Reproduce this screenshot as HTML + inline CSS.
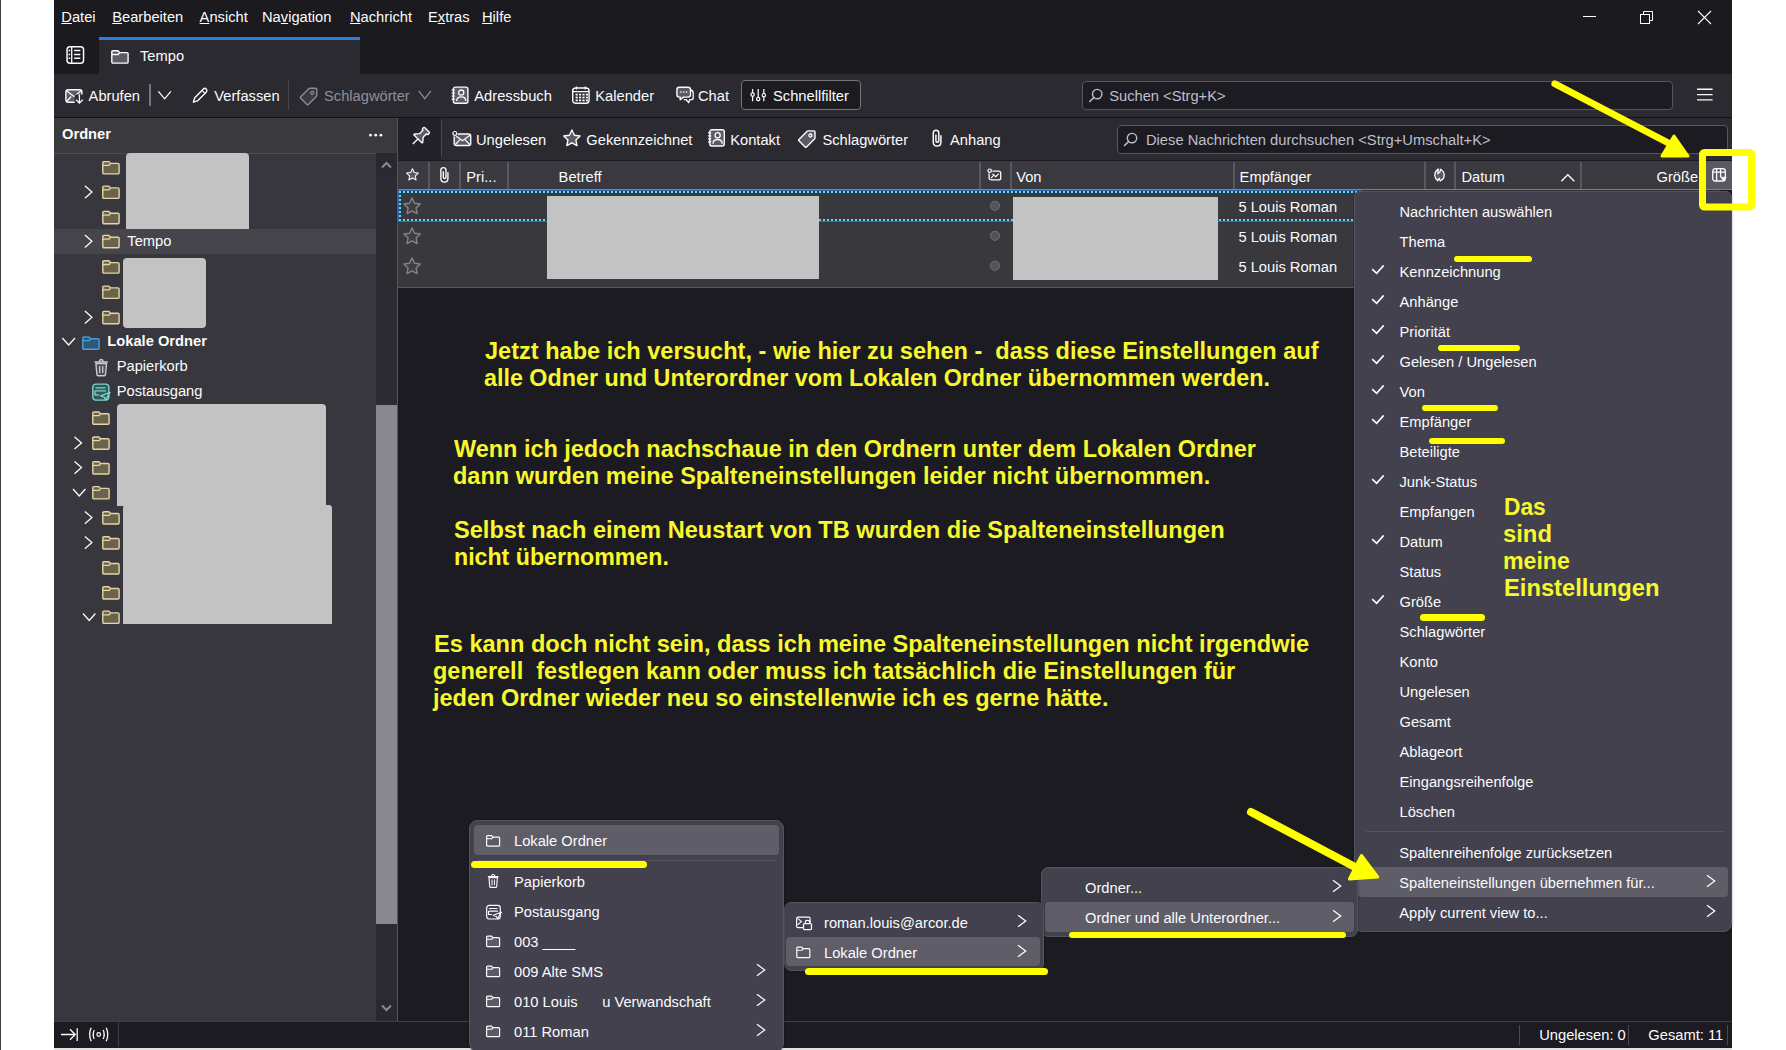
<!DOCTYPE html>
<html><head><meta charset="utf-8"><style>
html,body{margin:0;padding:0;width:1786px;height:1050px;overflow:hidden;background:#fff;}
.b{position:absolute;}
.t{position:absolute;white-space:nowrap;font-family:"Liberation Sans", sans-serif;}
u{text-decoration:underline;text-underline-offset:1px;text-decoration-thickness:1px;}
</style></head><body>
<div class="b" style="left:0px;top:0px;width:1786px;height:1050px;background:#ffffff;"></div>
<div class="b" style="left:0px;top:0px;width:1px;height:1050px;background:#3c3c3c;"></div>
<div class="b" style="left:54px;top:1047.5px;width:1678px;height:2.5px;background:#e2e2e2;"></div>
<div class="b" style="left:54px;top:0px;width:1678px;height:1047px;background:#1c1b22;"></div>
<div class="b" style="left:54px;top:0px;width:1678px;height:74px;background:#1b1a1f;"></div>
<div class="t" style="left:61.3px;top:6.9px;font-size:14.7px;line-height:20px;color:#fbfbfe;"><u>D</u>atei</div>
<div class="t" style="left:112.2px;top:6.9px;font-size:14.7px;line-height:20px;color:#fbfbfe;"><u>B</u>earbeiten</div>
<div class="t" style="left:199.6px;top:6.9px;font-size:14.7px;line-height:20px;color:#fbfbfe;"><u>A</u>nsicht</div>
<div class="t" style="left:262px;top:6.9px;font-size:14.7px;line-height:20px;color:#fbfbfe;">Na<u>v</u>igation</div>
<div class="t" style="left:350px;top:6.9px;font-size:14.7px;line-height:20px;color:#fbfbfe;"><u>N</u>achricht</div>
<div class="t" style="left:428px;top:6.9px;font-size:14.7px;line-height:20px;color:#fbfbfe;">E<u>x</u>tras</div>
<div class="t" style="left:482px;top:6.9px;font-size:14.7px;line-height:20px;color:#fbfbfe;"><u>H</u>ilfe</div>
<svg class="b" style="left:1583px;top:10px;" width="14" height="14" viewBox="0 0 14 14" fill="none"><path d="M0 6.5H13" stroke="#fbfbfe" stroke-width="1"/></svg>
<svg class="b" style="left:1639px;top:10px;" width="16" height="16" viewBox="0 0 16 16" fill="none"><rect x="1.5" y="4.5" width="9" height="9" stroke="#fbfbfe"/><path d="M4.5 4.5V1.5H13.5V10.5H10.5" stroke="#fbfbfe"/></svg>
<svg class="b" style="left:1697px;top:10px;" width="15" height="15" viewBox="0 0 15 15" fill="none"><path d="M1 1L14 14M14 1L1 14" stroke="#fbfbfe" stroke-width="1.1"/></svg>
<div class="b" style="left:54px;top:37px;width:45px;height:37px;background:#1a1a1f;"></div>
<div class="b" style="left:99px;top:37px;width:261px;height:37px;background:#2b2a31;"></div>
<div class="b" style="left:99px;top:37px;width:261px;height:3px;background:#2a7fdc;"></div>
<div class="t" style="left:140px;top:46.1px;font-size:14.7px;line-height:20px;color:#fbfbfe;">Tempo</div>
<div class="b" style="left:54px;top:74px;width:1678px;height:43px;background:#2b2a31;"></div>
<div class="b" style="left:54px;top:116.5px;width:1678px;height:1.5px;background:#131217;"></div>
<div class="t" style="left:88.6px;top:86.1px;font-size:14.7px;line-height:20px;color:#fbfbfe;">Abrufen</div>
<div class="b" style="left:149.3px;top:84px;width:1.5px;height:21.5px;background:#76757b;"></div>
<div class="t" style="left:214.3px;top:86.1px;font-size:14.7px;line-height:20px;color:#fbfbfe;">Verfassen</div>
<div class="b" style="left:288px;top:80px;width:1px;height:30px;background:#45444c;"></div>
<div class="t" style="left:324px;top:86.1px;font-size:14.7px;line-height:20px;color:#8f8f9d;">Schlagwörter</div>
<div class="t" style="left:474.3px;top:86.1px;font-size:14.7px;line-height:20px;color:#fbfbfe;">Adressbuch</div>
<div class="t" style="left:595.3px;top:86.1px;font-size:14.7px;line-height:20px;color:#fbfbfe;">Kalender</div>
<div class="t" style="left:698px;top:86.1px;font-size:14.7px;line-height:20px;color:#fbfbfe;">Chat</div>
<div class="b" style="left:740.5px;top:80px;width:120.5px;height:30px;background:#1c1b20;border:1px solid #76757c;border-radius:4px;box-sizing:border-box;"></div>
<div class="t" style="left:773px;top:86.1px;font-size:14.7px;line-height:20px;color:#fbfbfe;">Schnellfilter</div>
<div class="b" style="left:1082px;top:80.5px;width:591px;height:29.5px;background:#1c1b22;border:1px solid #57565e;border-radius:4px;box-sizing:border-box;"></div>
<div class="t" style="left:1109.2px;top:86.1px;font-size:14.7px;line-height:20px;color:#bfbfc9;">Suchen &lt;Strg+K&gt;</div>
<div class="b" style="left:54px;top:118px;width:343px;height:904px;background:#38373d;"></div>
<div class="b" style="left:54px;top:118px;width:343px;height:35px;background:#3a393e;"></div>
<div class="b" style="left:54px;top:152.5px;width:322px;height:1.0px;background:#4f4e56;"></div>
<div class="b" style="left:397px;top:118px;width:1px;height:904px;background:#56555d;"></div>
<div class="t" style="left:62px;top:124.4px;font-size:14.7px;line-height:20px;color:#fbfbfe;font-weight:bold;">Ordner</div>
<div class="b" style="left:398px;top:118px;width:1334px;height:42px;background:#2b2a31;"></div>
<div class="b" style="left:398px;top:118px;width:43px;height:42px;background:#23222b;"></div>
<div class="b" style="left:441px;top:120px;width:1px;height:37px;background:#4a4951;"></div>
<div class="b" style="left:398px;top:160px;width:1334px;height:1px;background:#1c1b22;"></div>
<div class="t" style="left:476px;top:130.1px;font-size:14.7px;line-height:20px;color:#fbfbfe;">Ungelesen</div>
<div class="t" style="left:586.3px;top:130.1px;font-size:14.7px;line-height:20px;color:#fbfbfe;">Gekennzeichnet</div>
<div class="t" style="left:730.2px;top:130.1px;font-size:14.7px;line-height:20px;color:#fbfbfe;">Kontakt</div>
<div class="t" style="left:822.4px;top:130.1px;font-size:14.7px;line-height:20px;color:#fbfbfe;">Schlagwörter</div>
<div class="t" style="left:950px;top:130.1px;font-size:14.7px;line-height:20px;color:#fbfbfe;">Anhang</div>
<div class="b" style="left:1117px;top:124.5px;width:611px;height:29.5px;background:#1c1b22;border:1px solid #57565e;border-radius:4px;box-sizing:border-box;"></div>
<div class="t" style="left:1146px;top:130.1px;font-size:14.7px;line-height:20px;color:#bfbfc9;">Diese Nachrichten durchsuchen &lt;Strg+Umschalt+K&gt;</div>
<div class="b" style="left:398px;top:161px;width:1334px;height:28px;background:#3a393f;"></div>
<div class="b" style="left:398px;top:189px;width:1334px;height:1px;background:#7b878d;"></div>
<div class="b" style="left:428.3px;top:161.5px;width:2.0px;height:27.0px;background:#58575f;"></div>
<div class="b" style="left:459.2px;top:161.5px;width:2.0px;height:27.0px;background:#58575f;"></div>
<div class="b" style="left:506.5px;top:161.5px;width:2.0px;height:27.0px;background:#58575f;"></div>
<div class="b" style="left:978.7px;top:161.5px;width:2.0px;height:27.0px;background:#58575f;"></div>
<div class="b" style="left:1009.5px;top:161.5px;width:2.0px;height:27.0px;background:#58575f;"></div>
<div class="b" style="left:1232.5px;top:161.5px;width:2.0px;height:27.0px;background:#58575f;"></div>
<div class="b" style="left:1424.4px;top:161.5px;width:2.0px;height:27.0px;background:#58575f;"></div>
<div class="b" style="left:1454.4px;top:161.5px;width:2.0px;height:27.0px;background:#58575f;"></div>
<div class="b" style="left:1580.4px;top:161.5px;width:2.0px;height:27.0px;background:#58575f;"></div>
<div class="t" style="left:466.3px;top:166.7px;font-size:14.7px;line-height:20px;color:#fbfbfe;">Pri...</div>
<div class="t" style="left:558.6px;top:166.7px;font-size:14.7px;line-height:20px;color:#fbfbfe;">Betreff</div>
<div class="t" style="left:1016.2px;top:166.7px;font-size:14.7px;line-height:20px;color:#fbfbfe;">Von</div>
<div class="t" style="left:1239.6px;top:166.7px;font-size:14.7px;line-height:20px;color:#fbfbfe;">Empfänger</div>
<div class="t" style="left:1461.4px;top:166.7px;font-size:14.7px;line-height:20px;color:#fbfbfe;">Datum</div>
<div class="t" style="left:1656.5px;top:166.7px;font-size:14.7px;line-height:20px;color:#fbfbfe;">Größe</div>
<div class="b" style="left:1705.6px;top:161px;width:26.40000000000009px;height:28px;background:#5a5961;"></div>
<div class="b" style="left:398px;top:190px;width:1334px;height:97px;background:#38383d;"></div>
<div class="b" style="left:398px;top:287px;width:1334px;height:1px;background:#56555d;"></div>
<div class="t" style="left:1238.4px;top:196.6px;font-size:14.7px;line-height:20px;color:#fbfbfe;">5 Louis Roman</div>
<div class="t" style="left:1238.4px;top:226.6px;font-size:14.7px;line-height:20px;color:#fbfbfe;">5 Louis Roman</div>
<div class="t" style="left:1238.4px;top:256.6px;font-size:14.7px;line-height:20px;color:#fbfbfe;">5 Louis Roman</div>
<div class="b" style="left:398px;top:190px;width:964px;height:32px;border:1px solid #2a6cb0;box-sizing:border-box;"></div>
<div class="b" style="left:399px;top:191px;width:962px;height:30px;border:2px solid #0e4867;box-sizing:border-box;"></div>
<div class="b" style="left:399px;top:191px;width:962px;height:30px;border:2px dotted #78d2f2;box-sizing:border-box;"></div>
<div class="b" style="left:547px;top:196px;width:272px;height:83px;background:#c3c3c3;"></div>
<div class="b" style="left:1013px;top:197px;width:205px;height:83px;background:#c3c3c3;"></div>
<div class="b" style="left:54px;top:229px;width:322px;height:25px;background:#46454c;"></div>
<div class="t" style="left:127.3px;top:231.4px;font-size:14.7px;line-height:20px;color:#fbfbfe;">Tempo</div>
<div class="t" style="left:107.3px;top:331.4px;font-size:14.7px;line-height:20px;color:#fbfbfe;font-weight:bold;">Lokale Ordner</div>
<div class="t" style="left:116.7px;top:356.4px;font-size:14.7px;line-height:20px;color:#fbfbfe;">Papierkorb</div>
<div class="t" style="left:116.7px;top:381.4px;font-size:14.7px;line-height:20px;color:#fbfbfe;">Postausgang</div>
<div class="b" style="left:126px;top:153px;width:123px;height:76px;background:#c3c3c3;border-radius:4px 4px 0 0;"></div>
<div class="b" style="left:123px;top:258px;width:83px;height:70px;background:#c3c3c3;border-radius:4px;"></div>
<div class="b" style="left:117px;top:404px;width:209px;height:102px;background:#c3c3c3;border-radius:4px 4px 0 0;"></div>
<div class="b" style="left:123px;top:505px;width:209px;height:119px;background:#c3c3c3;border-radius:3px 3px 0 0;"></div>
<div class="b" style="left:376px;top:153px;width:21px;height:869px;background:#2c2b31;"></div>
<div class="b" style="left:376px;top:405px;width:21px;height:519px;background:#89888e;"></div>
<div class="b" style="left:376px;top:153px;width:21px;height:22px;background:#29282e;"></div>
<div class="b" style="left:376px;top:999px;width:21px;height:22px;background:#29282e;"></div>
<div class="b" style="left:54px;top:1021px;width:1678px;height:1px;background:#3f3e46;"></div>
<div class="b" style="left:54px;top:1022px;width:1678px;height:25.5px;background:#1c1b22;"></div>
<div class="b" style="left:117.5px;top:1022px;width:1.0px;height:25px;background:#3f3e46;"></div>
<div class="b" style="left:1519.2px;top:1025px;width:1.0px;height:20px;background:#4a4951;"></div>
<div class="b" style="left:1628.3px;top:1025px;width:1.0px;height:20px;background:#4a4951;"></div>
<div class="b" style="left:1726.7px;top:1025px;width:1.0px;height:20px;background:#4a4951;"></div>
<div class="t" style="left:1539.2px;top:1025.4px;font-size:14.7px;line-height:20px;color:#fbfbfe;">Ungelesen: 0</div>
<div class="t" style="left:1648.3px;top:1025.4px;font-size:14.7px;line-height:20px;color:#fbfbfe;">Gesamt: 11</div>
<svg class="b" style="left:0;top:0" width="1786" height="1050" viewBox="0 0 1786 1050" fill="none"><g transform="translate(66.3,46) scale(1)"><rect x="0.75" y="0.75" width="16.5" height="16.5" rx="3" stroke="#fbfbfe" stroke-width="1.5"/><path d="M5.4 0.75V17.25" stroke="#fbfbfe" stroke-width="1.3"/><circle cx="3.1" cy="4.5" r="0.9" fill="#fbfbfe"/><circle cx="3.1" cy="8.4" r="0.9" fill="#fbfbfe"/><circle cx="3.1" cy="12.2" r="0.9" fill="#fbfbfe"/><path d="M7.8 4.5H14M7.8 8.4H14M7.8 12.2H14" stroke="#fbfbfe" stroke-width="1.5"/></g><g transform="translate(111,49.9) scale(1)"><path d="M2 0.9H6.8L8.6 2.7H15.9Q17.1 2.7 17.1 3.9V12Q17.1 13.2 15.9 13.2H2Q0.8 13.2 0.8 12V2.1Q0.8 0.9 2 0.9Z" fill="#5b5b66" stroke="#fbfbfe" stroke-width="1.4"/><path d="M0.8 4.6H7.2L8.6 2.7" stroke="#fbfbfe" stroke-width="1.26"/></g><g transform="translate(65.2,89) scale(1)"><rect x="0.7" y="0.7" width="16" height="12.6" rx="2" fill="#5b5b66" stroke="#fbfbfe" stroke-width="1.4"/><path d="M1 1.5L8.7 7.5L16.3 1.5M1.5 12.5L6 7.5" stroke="#fbfbfe" stroke-width="1.3"/><rect x="9.5" y="5.5" width="9" height="9.5" fill="#2b2a31"/><path d="M14.2 5.2V14M10.8 10.8L14.2 14.2L17.6 10.8" stroke="#fbfbfe" stroke-width="1.3"/></g><path d="M158.4 91.3L164.65 98.8L170.9 91.3" stroke="#fbfbfe" stroke-width="1.3" fill="none"/><g transform="translate(192.4,87.6) scale(1)"><path d="M11 1.3Q12.3 0.2 13.6 1.3L14 1.7Q15.1 3 14 4.3L5 13.3L1 14.6L2.2 10.4Z" fill="none" stroke="#fbfbfe" stroke-width="1.4" stroke-linejoin="round"/><path d="M9.6 2.8L12.6 5.8" stroke="#fbfbfe" stroke-width="1.3"/></g><g transform="translate(299.6,87.3) scale(1)"><path d="M10.3 1H16.2Q17.2 1 17.2 2V7.9Q17.2 8.6 16.7 9.1L8.7 17.1Q8 17.8 7.3 17.1L1.1 10.9Q0.4 10.2 1.1 9.5L9.1 1.5Q9.6 1 10.3 1Z" fill="#3a3942" stroke="#8a8a93" stroke-width="1.4"/><circle cx="12.6" cy="5.6" r="1.5" stroke="#8a8a93" stroke-width="1.3" fill="none"/></g><path d="M418.7 90.8L424.84999999999997 98.6L431.0 90.8" stroke="#8a8a93" stroke-width="1.3" fill="none"/><g transform="translate(451.6,86.4) scale(1)"><rect x="1.8" y="0.7" width="14.5" height="16.2" rx="2" fill="#5b5b66" stroke="#fbfbfe" stroke-width="1.4"/><path d="M0 3.8H3.2M0 6.8H3.2M0 9.8H3.2M0 12.8H3.2" stroke="#fbfbfe" stroke-width="1.2"/><circle cx="9.6" cy="6.2" r="2.6" stroke="#fbfbfe" stroke-width="1.3" fill="none"/><path d="M5 14.6Q5 10.4 9.6 10.4Q14.2 10.4 14.2 14.6" stroke="#fbfbfe" stroke-width="1.3" fill="none"/></g><g transform="translate(572,86.5) scale(1)"><rect x="0.7" y="1.5" width="16.4" height="15.3" rx="3" fill="none" stroke="#fbfbfe" stroke-width="1.4"/><path d="M0.7 5.2H17.1M4.5 0V3M13.3 0V3" stroke="#fbfbfe" stroke-width="1.3"/><rect x="3.6" y="7.2" width="2.2" height="1.8" fill="#fbfbfe"/><rect x="3.6" y="10.1" width="2.2" height="1.8" fill="#fbfbfe"/><rect x="3.6" y="13.0" width="2.2" height="1.8" fill="#fbfbfe"/><rect x="7.0" y="7.2" width="2.2" height="1.8" fill="#fbfbfe"/><rect x="7.0" y="10.1" width="2.2" height="1.8" fill="#fbfbfe"/><rect x="7.0" y="13.0" width="2.2" height="1.8" fill="#fbfbfe"/><rect x="10.4" y="7.2" width="2.2" height="1.8" fill="#fbfbfe"/><rect x="10.4" y="10.1" width="2.2" height="1.8" fill="#fbfbfe"/><rect x="10.4" y="13.0" width="2.2" height="1.8" fill="#fbfbfe"/><rect x="13.799999999999999" y="7.2" width="2.2" height="1.8" fill="#fbfbfe"/><rect x="13.799999999999999" y="10.1" width="2.2" height="1.8" fill="#fbfbfe"/><rect x="13.799999999999999" y="13.0" width="2.2" height="1.8" fill="#fbfbfe"/></g><g transform="translate(676.2,86.5) scale(1)"><path d="M3 0.8H12Q14.3 0.8 14.3 3.1V8.3Q14.3 10.6 12 10.6H7.2L4 13.2V10.6H3Q0.7 10.6 0.7 8.3V3.1Q0.7 0.8 3 0.8Z" fill="#5b5b66" stroke="#fbfbfe" stroke-width="1.4" stroke-linejoin="round"/><path d="M14.6 3.5Q17 4 17 6.3V11.2Q17 13.2 15 13.2H13.4L12.6 16.2L10 13.2H7.5" stroke="#fbfbfe" stroke-width="1.3" fill="none" stroke-linejoin="round"/><circle cx="4.7" cy="5.6" r="0.8" fill="#fbfbfe"/><circle cx="7.5" cy="5.6" r="0.8" fill="#fbfbfe"/><circle cx="10.3" cy="5.6" r="0.8" fill="#fbfbfe"/></g><path d="M752.6 89V101.2M758.2 89V101.2M763.8 89V101.2" stroke="#fbfbfe" stroke-width="1.25"/><circle cx="752.6" cy="94.6" r="1.7" fill="#1c1b22" stroke="#fbfbfe" stroke-width="1.2"/><circle cx="758.2" cy="99" r="1.7" fill="#1c1b22" stroke="#fbfbfe" stroke-width="1.2"/><circle cx="763.8" cy="95.2" r="1.7" fill="#1c1b22" stroke="#fbfbfe" stroke-width="1.2"/><g transform="translate(1088.6,88.5) scale(1)"><circle cx="8.6" cy="5.6" r="4.7" stroke="#bfbfc9" stroke-width="1.4" fill="none"/><path d="M5.2 9L0.8 13.4" stroke="#bfbfc9" stroke-width="1.5"/></g><g transform="translate(1123.4,132.5) scale(1)"><circle cx="8.6" cy="5.6" r="4.7" stroke="#bfbfc9" stroke-width="1.4" fill="none"/><path d="M5.2 9L0.8 13.4" stroke="#bfbfc9" stroke-width="1.5"/></g><path d="M1697 89.3H1712.6M1697 94.6H1712.6M1697 99.9H1712.6" stroke="#fbfbfe" stroke-width="1.4"/><g transform="translate(419.8,137) rotate(45) scale(1.28) translate(0,-7.9)"><path d="M-3.2 0.8Q-3.2 0 -2.4 0H2.4Q3.2 0 3.2 0.8V1.6Q3.2 2.4 2.4 2.4H2V6.2L4.6 9.2Q4.9 10 4 10H-4Q-4.9 10 -4.6 9.2L-2 6.2V2.4H-2.4Q-3.2 2.4 -3.2 1.6Z" fill="#5b5b66" stroke="#fbfbfe" stroke-width="1.05" stroke-linejoin="round"/><path d="M0 10V15.6" stroke="#fbfbfe" stroke-width="1.05"/></g><g transform="translate(453,131) scale(1)"><rect x="1.2" y="3" width="16.5" height="11.5" rx="2" fill="#5b5b66" stroke="#fbfbfe" stroke-width="1.4"/><path d="M2.4 13.5L7 8.6M16.6 13.5L12 8.6M1.6 4L9.5 9.8L17.3 4" stroke="#fbfbfe" stroke-width="1.2"/><circle cx="1.8" cy="2.4" r="3" fill="#2b2a31"/><circle cx="1.8" cy="2.4" r="1.9" stroke="#fbfbfe" stroke-width="1.2" fill="none"/></g><g transform="translate(563.2,129.2) scale(1)"><path d="M8.70 0.80 L11.17 6.00 L16.88 6.74 L12.69 10.70 L13.75 16.36 L8.70 13.60 L3.65 16.36 L4.71 10.70 L0.52 6.74 L6.23 6.00Z" fill="#5b5b66" stroke="#fbfbfe" stroke-width="1.4" stroke-linejoin="round"/></g><g transform="translate(708,129.1) scale(1)"><rect x="1.8" y="0.7" width="14.5" height="16.2" rx="2" fill="#5b5b66" stroke="#fbfbfe" stroke-width="1.4"/><path d="M0 3.8H3.2M0 6.8H3.2M0 9.8H3.2M0 12.8H3.2" stroke="#fbfbfe" stroke-width="1.2"/><circle cx="9.6" cy="6.2" r="2.6" stroke="#fbfbfe" stroke-width="1.3" fill="none"/><path d="M5 14.6Q5 10.4 9.6 10.4Q14.2 10.4 14.2 14.6" stroke="#fbfbfe" stroke-width="1.3" fill="none"/></g><g transform="translate(797.8,129.9) scale(1)"><path d="M10.3 1H16.2Q17.2 1 17.2 2V7.9Q17.2 8.6 16.7 9.1L8.7 17.1Q8 17.8 7.3 17.1L1.1 10.9Q0.4 10.2 1.1 9.5L9.1 1.5Q9.6 1 10.3 1Z" fill="#5b5b66" stroke="#fbfbfe" stroke-width="1.4"/><circle cx="12.6" cy="5.6" r="1.5" stroke="#fbfbfe" stroke-width="1.3" fill="none"/></g><g transform="translate(932,129.5) scale(1.06)"><path d="M8.4 5.5V12Q8.4 15.6 4.8 15.6Q1.2 15.6 1.2 12V3.6Q1.2 0.8 3.8 0.8Q6.4 0.8 6.4 3.6V10.6Q6.4 12 5 12Q3.7 12 3.7 10.6V4.6" stroke="#fbfbfe" stroke-width="1.4" fill="none"/></g><g transform="translate(406.2,168.2) scale(0.72)"><path d="M8.70 0.80 L11.17 6.00 L16.88 6.74 L12.69 10.70 L13.75 16.36 L8.70 13.60 L3.65 16.36 L4.71 10.70 L0.52 6.74 L6.23 6.00Z" fill="#5b5b66" stroke="#fbfbfe" stroke-width="1.4" stroke-linejoin="round"/></g><g transform="translate(439.7,166.8) scale(0.98)"><path d="M8.4 5.5V12Q8.4 15.6 4.8 15.6Q1.2 15.6 1.2 12V3.6Q1.2 0.8 3.8 0.8Q6.4 0.8 6.4 3.6V10.6Q6.4 12 5 12Q3.7 12 3.7 10.6V4.6" stroke="#fbfbfe" stroke-width="1.4" fill="none"/></g><g transform="translate(987.5,168.5) scale(1)"><rect x="1.6" y="2.6" width="11.6" height="8.8" rx="2" fill="none" stroke="#fbfbfe" stroke-width="1.3"/><path d="M3.6 9.6L6.3 6.6L8.3 8.2L11.3 5.2M5 5.2L7.6 7.6" stroke="#fbfbfe" stroke-width="1.2" fill="none"/><circle cx="2.2" cy="2.2" r="2.7" fill="#3a3940"/><circle cx="2.2" cy="2.2" r="1.7" stroke="#fbfbfe" stroke-width="1.2" fill="none"/></g><g transform="translate(1434,168) scale(1)"><path d="M4.2 1Q0.6 3.5 0.8 7.5Q1.1 11 3.8 12.8L5 10.2L6.3 12.8Q10.2 11.2 10.2 7Q10.2 3.5 6.5 1.2L6 3.8Q4.8 4.2 3.8 5.8Z" fill="#5b5b66" stroke="#fbfbfe" stroke-width="1.3" stroke-linejoin="round"/></g><path d="M1561.3 181.2L1567.8 174.7L1574.3 181.2" stroke="#fbfbfe" stroke-width="1.4" fill="none"/><g transform="translate(1712,168) scale(1)"><rect x="0.7" y="0.7" width="12.6" height="12.3" rx="2.5" fill="#5b5b66" stroke="#fbfbfe" stroke-width="1.3"/><path d="M0.7 4.2H13.3M4.6 0.7V13M8.6 0.7V9" stroke="#fbfbfe" stroke-width="1.3"/><path d="M8.6 9.2H14.2L11.4 12.6Z" fill="#fbfbfe" stroke="#fbfbfe" stroke-width="0.8" stroke-linejoin="round"/></g><g transform="translate(403.4,197.2) scale(1.0)"><path d="M8.70 0.80 L11.17 6.00 L16.88 6.74 L12.69 10.70 L13.75 16.36 L8.70 13.60 L3.65 16.36 L4.71 10.70 L0.52 6.74 L6.23 6.00Z" fill="#3f3e45" stroke="#84838a" stroke-width="1.4" stroke-linejoin="round"/></g><circle cx="995" cy="205.8" r="4.6" fill="#545359" stroke="#6f6e75" stroke-width="1"/><g transform="translate(403.4,227.2) scale(1.0)"><path d="M8.70 0.80 L11.17 6.00 L16.88 6.74 L12.69 10.70 L13.75 16.36 L8.70 13.60 L3.65 16.36 L4.71 10.70 L0.52 6.74 L6.23 6.00Z" fill="#3f3e45" stroke="#84838a" stroke-width="1.4" stroke-linejoin="round"/></g><circle cx="995" cy="235.8" r="4.6" fill="#545359" stroke="#6f6e75" stroke-width="1"/><g transform="translate(403.4,257.2) scale(1.0)"><path d="M8.70 0.80 L11.17 6.00 L16.88 6.74 L12.69 10.70 L13.75 16.36 L8.70 13.60 L3.65 16.36 L4.71 10.70 L0.52 6.74 L6.23 6.00Z" fill="#3f3e45" stroke="#84838a" stroke-width="1.4" stroke-linejoin="round"/></g><circle cx="995" cy="265.8" r="4.6" fill="#545359" stroke="#6f6e75" stroke-width="1"/><circle cx="370.5" cy="135.2" r="1.4" fill="#fbfbfe"/><circle cx="375.7" cy="135.2" r="1.4" fill="#fbfbfe"/><circle cx="380.9" cy="135.2" r="1.4" fill="#fbfbfe"/><path d="M382 167.5L386.5 163L391 167.5" stroke="#8a8a90" stroke-width="2" fill="none"/><path d="M382 1005.5L386.5 1010L391 1005.5" stroke="#8a8a90" stroke-width="2" fill="none"/><g transform="translate(102,160.7) scale(1)"><path d="M2 0.9H6.8L8.6 2.7H15.9Q17.1 2.7 17.1 3.9V12Q17.1 13.2 15.9 13.2H2Q0.8 13.2 0.8 12V2.1Q0.8 0.9 2 0.9Z" fill="#6b624c" stroke="#e4d6a6" stroke-width="1.4"/><path d="M0.8 4.6H7.2L8.6 2.7" stroke="#e4d6a6" stroke-width="1.26"/></g><g transform="translate(102,185.2) scale(1)"><path d="M2 0.9H6.8L8.6 2.7H15.9Q17.1 2.7 17.1 3.9V12Q17.1 13.2 15.9 13.2H2Q0.8 13.2 0.8 12V2.1Q0.8 0.9 2 0.9Z" fill="#6b624c" stroke="#e4d6a6" stroke-width="1.4"/><path d="M0.8 4.6H7.2L8.6 2.7" stroke="#e4d6a6" stroke-width="1.26"/></g><path d="M84.9 185.8L91.9 192.0L84.9 198.20000000000002" stroke="#fbfbfe" stroke-width="1.3" fill="none"/><g transform="translate(102,210.5) scale(1)"><path d="M2 0.9H6.8L8.6 2.7H15.9Q17.1 2.7 17.1 3.9V12Q17.1 13.2 15.9 13.2H2Q0.8 13.2 0.8 12V2.1Q0.8 0.9 2 0.9Z" fill="#6b624c" stroke="#e4d6a6" stroke-width="1.4"/><path d="M0.8 4.6H7.2L8.6 2.7" stroke="#e4d6a6" stroke-width="1.26"/></g><g transform="translate(102,234.5) scale(1)"><path d="M2 0.9H6.8L8.6 2.7H15.9Q17.1 2.7 17.1 3.9V12Q17.1 13.2 15.9 13.2H2Q0.8 13.2 0.8 12V2.1Q0.8 0.9 2 0.9Z" fill="#6b624c" stroke="#e4d6a6" stroke-width="1.4"/><path d="M0.8 4.6H7.2L8.6 2.7" stroke="#e4d6a6" stroke-width="1.26"/></g><path d="M84.9 235.10000000000002L91.9 241.3L84.9 247.50000000000003" stroke="#fbfbfe" stroke-width="1.3" fill="none"/><g transform="translate(102,259.9) scale(1)"><path d="M2 0.9H6.8L8.6 2.7H15.9Q17.1 2.7 17.1 3.9V12Q17.1 13.2 15.9 13.2H2Q0.8 13.2 0.8 12V2.1Q0.8 0.9 2 0.9Z" fill="#6b624c" stroke="#e4d6a6" stroke-width="1.4"/><path d="M0.8 4.6H7.2L8.6 2.7" stroke="#e4d6a6" stroke-width="1.26"/></g><g transform="translate(102,285.2) scale(1)"><path d="M2 0.9H6.8L8.6 2.7H15.9Q17.1 2.7 17.1 3.9V12Q17.1 13.2 15.9 13.2H2Q0.8 13.2 0.8 12V2.1Q0.8 0.9 2 0.9Z" fill="#6b624c" stroke="#e4d6a6" stroke-width="1.4"/><path d="M0.8 4.6H7.2L8.6 2.7" stroke="#e4d6a6" stroke-width="1.26"/></g><g transform="translate(102,310.5) scale(1)"><path d="M2 0.9H6.8L8.6 2.7H15.9Q17.1 2.7 17.1 3.9V12Q17.1 13.2 15.9 13.2H2Q0.8 13.2 0.8 12V2.1Q0.8 0.9 2 0.9Z" fill="#6b624c" stroke="#e4d6a6" stroke-width="1.4"/><path d="M0.8 4.6H7.2L8.6 2.7" stroke="#e4d6a6" stroke-width="1.26"/></g><path d="M84.9 311.1L91.9 317.3L84.9 323.5" stroke="#fbfbfe" stroke-width="1.3" fill="none"/><path d="M62.3 338L68.64999999999999 345L75.0 338" stroke="#fbfbfe" stroke-width="1.3" fill="none"/><g transform="translate(82,336) scale(1)"><path d="M2 0.9H6.8L8.6 2.7H15.9Q17.1 2.7 17.1 3.9V12Q17.1 13.2 15.9 13.2H2Q0.8 13.2 0.8 12V2.1Q0.8 0.9 2 0.9Z" fill="#2f5778" stroke="#4aa0de" stroke-width="1.4"/><path d="M0.8 4.6H7.2L8.6 2.7" stroke="#4aa0de" stroke-width="1.26"/></g><g transform="translate(93.7,358.5) scale(1)"><path d="M2.2 5H12.8L11.8 16.2Q11.6 17.2 10.6 17.2H4.4Q3.4 17.2 3.2 16.2Z" fill="#4e4d55" stroke="#c9c9d0" stroke-width="1.4"/><path d="M0.8 3.5H14.2M5.6 3.3Q5.6 1 7.5 1Q9.4 1 9.4 3.3M6 7.5V14.5M9 7.5V14.5" stroke="#c9c9d0" stroke-width="1.3"/></g><g transform="translate(92,383.3) scale(1)"><rect x="0.8" y="0.8" width="16" height="16" rx="3" fill="#2f5a58" stroke="#7fd3cb" stroke-width="1.4"/><path d="M3.5 4.5H13.5M3 7.5H14M3 7.5V11.5H7" stroke="#7fd3cb" stroke-width="1.3" fill="none"/><path d="M8.5 12.5L18 9L13.5 16.5L12.3 13.8Z" fill="#2f5a58" stroke="#7fd3cb" stroke-width="1.3" stroke-linejoin="round"/></g><g transform="translate(92,411.09999999999997) scale(1)"><path d="M2 0.9H6.8L8.6 2.7H15.9Q17.1 2.7 17.1 3.9V12Q17.1 13.2 15.9 13.2H2Q0.8 13.2 0.8 12V2.1Q0.8 0.9 2 0.9Z" fill="#6b624c" stroke="#e4d6a6" stroke-width="1.4"/><path d="M0.8 4.6H7.2L8.6 2.7" stroke="#e4d6a6" stroke-width="1.26"/></g><g transform="translate(92,436.09999999999997) scale(1)"><path d="M2 0.9H6.8L8.6 2.7H15.9Q17.1 2.7 17.1 3.9V12Q17.1 13.2 15.9 13.2H2Q0.8 13.2 0.8 12V2.1Q0.8 0.9 2 0.9Z" fill="#6b624c" stroke="#e4d6a6" stroke-width="1.4"/><path d="M0.8 4.6H7.2L8.6 2.7" stroke="#e4d6a6" stroke-width="1.26"/></g><path d="M74.5 436.7L81.5 442.9L74.5 449.09999999999997" stroke="#fbfbfe" stroke-width="1.3" fill="none"/><g transform="translate(92,460.8) scale(1)"><path d="M2 0.9H6.8L8.6 2.7H15.9Q17.1 2.7 17.1 3.9V12Q17.1 13.2 15.9 13.2H2Q0.8 13.2 0.8 12V2.1Q0.8 0.9 2 0.9Z" fill="#6b624c" stroke="#e4d6a6" stroke-width="1.4"/><path d="M0.8 4.6H7.2L8.6 2.7" stroke="#e4d6a6" stroke-width="1.26"/></g><path d="M74.5 461.40000000000003L81.5 467.6L74.5 473.8" stroke="#fbfbfe" stroke-width="1.3" fill="none"/><g transform="translate(92,485.7) scale(1)"><path d="M2 0.9H6.8L8.6 2.7H15.9Q17.1 2.7 17.1 3.9V12Q17.1 13.2 15.9 13.2H2Q0.8 13.2 0.8 12V2.1Q0.8 0.9 2 0.9Z" fill="#6b624c" stroke="#e4d6a6" stroke-width="1.4"/><path d="M0.8 4.6H7.2L8.6 2.7" stroke="#e4d6a6" stroke-width="1.26"/></g><path d="M73 489.0L79.2 496.0L85.4 489.0" stroke="#fbfbfe" stroke-width="1.3" fill="none"/><g transform="translate(102,510.8) scale(1)"><path d="M2 0.9H6.8L8.6 2.7H15.9Q17.1 2.7 17.1 3.9V12Q17.1 13.2 15.9 13.2H2Q0.8 13.2 0.8 12V2.1Q0.8 0.9 2 0.9Z" fill="#6b624c" stroke="#e4d6a6" stroke-width="1.4"/><path d="M0.8 4.6H7.2L8.6 2.7" stroke="#e4d6a6" stroke-width="1.26"/></g><path d="M84.9 511.40000000000003L91.9 517.6L84.9 523.8000000000001" stroke="#fbfbfe" stroke-width="1.3" fill="none"/><g transform="translate(102,535.8000000000001) scale(1)"><path d="M2 0.9H6.8L8.6 2.7H15.9Q17.1 2.7 17.1 3.9V12Q17.1 13.2 15.9 13.2H2Q0.8 13.2 0.8 12V2.1Q0.8 0.9 2 0.9Z" fill="#6b624c" stroke="#e4d6a6" stroke-width="1.4"/><path d="M0.8 4.6H7.2L8.6 2.7" stroke="#e4d6a6" stroke-width="1.26"/></g><path d="M84.9 536.4L91.9 542.6L84.9 548.8" stroke="#fbfbfe" stroke-width="1.3" fill="none"/><g transform="translate(102,560.8000000000001) scale(1)"><path d="M2 0.9H6.8L8.6 2.7H15.9Q17.1 2.7 17.1 3.9V12Q17.1 13.2 15.9 13.2H2Q0.8 13.2 0.8 12V2.1Q0.8 0.9 2 0.9Z" fill="#6b624c" stroke="#e4d6a6" stroke-width="1.4"/><path d="M0.8 4.6H7.2L8.6 2.7" stroke="#e4d6a6" stroke-width="1.26"/></g><g transform="translate(102,585.8000000000001) scale(1)"><path d="M2 0.9H6.8L8.6 2.7H15.9Q17.1 2.7 17.1 3.9V12Q17.1 13.2 15.9 13.2H2Q0.8 13.2 0.8 12V2.1Q0.8 0.9 2 0.9Z" fill="#6b624c" stroke="#e4d6a6" stroke-width="1.4"/><path d="M0.8 4.6H7.2L8.6 2.7" stroke="#e4d6a6" stroke-width="1.26"/></g><g transform="translate(102,610.2) scale(1)"><path d="M2 0.9H6.8L8.6 2.7H15.9Q17.1 2.7 17.1 3.9V12Q17.1 13.2 15.9 13.2H2Q0.8 13.2 0.8 12V2.1Q0.8 0.9 2 0.9Z" fill="#6b624c" stroke="#e4d6a6" stroke-width="1.4"/><path d="M0.8 4.6H7.2L8.6 2.7" stroke="#e4d6a6" stroke-width="1.26"/></g><path d="M83 613.5L89.2 620.5L95.4 613.5" stroke="#fbfbfe" stroke-width="1.3" fill="none"/><path d="M61 1034.5H75M70 1029.3L75.2 1034.5L70 1039.7M77.2 1028.2V1041" stroke="#fbfbfe" stroke-width="1.3" fill="none"/><circle cx="98.7" cy="1034.5" r="1.8" stroke="#fbfbfe" stroke-width="1.2" fill="none"/><path d="M94.2 1030Q92.2 1034.5 94.2 1039M103.2 1030Q105.2 1034.5 103.2 1039M91.2 1027.8Q88 1034.5 91.2 1041.2M106.2 1027.8Q109.4 1034.5 106.2 1041.2" stroke="#fbfbfe" stroke-width="1.3" fill="none"/></svg>
<div class="t" style="left:485.30px;top:331.4px;font-size:23px;line-height:40px;color:#f8f82e;font-weight:bold;white-space:pre;transform:scaleX(1.0238);transform-origin:0 0;">Jetzt habe ich versucht, - wie hier zu sehen -  dass diese Einstellungen auf</div>
<div class="t" style="left:484.29px;top:358.3px;font-size:23px;line-height:40px;color:#f8f82e;font-weight:bold;white-space:pre;transform:scaleX(1.0131);transform-origin:0 0;">alle Odner und Unterordner vom Lokalen Ordner übernommen werden.</div>
<div class="t" style="left:454.40px;top:429.1px;font-size:23px;line-height:40px;color:#f8f82e;font-weight:bold;white-space:pre;transform:scaleX(1.0191);transform-origin:0 0;">Wenn ich jedoch nachschaue in den Ordnern unter dem Lokalen Ordner</div>
<div class="t" style="left:453.38px;top:456.4px;font-size:23px;line-height:40px;color:#f8f82e;font-weight:bold;white-space:pre;transform:scaleX(1.0215);transform-origin:0 0;">dann wurden meine Spalteneinstellungen leider nicht übernommen.</div>
<div class="t" style="left:453.87px;top:510.3px;font-size:23px;line-height:40px;color:#f8f82e;font-weight:bold;white-space:pre;transform:scaleX(1.0254);transform-origin:0 0;">Selbst nach einem Neustart von TB wurden die Spalteneinstellungen</div>
<div class="t" style="left:453.89px;top:537.0px;font-size:23px;line-height:40px;color:#f8f82e;font-weight:bold;white-space:pre;transform:scaleX(1.0066);transform-origin:0 0;">nicht übernommen.</div>
<div class="t" style="left:433.87px;top:624.0px;font-size:23px;line-height:40px;color:#f8f82e;font-weight:bold;white-space:pre;transform:scaleX(1.0251);transform-origin:0 0;">Es kann doch nicht sein, dass ich meine Spalteneinstellungen nicht irgendwie</div>
<div class="t" style="left:432.98px;top:651.4px;font-size:23px;line-height:40px;color:#f8f82e;font-weight:bold;white-space:pre;transform:scaleX(1.0223);transform-origin:0 0;">generell  festlegen kann oder muss ich tatsächlich die Einstellungen für</div>
<div class="t" style="left:433.32px;top:677.9px;font-size:23px;line-height:40px;color:#f8f82e;font-weight:bold;white-space:pre;transform:scaleX(1.0222);transform-origin:0 0;">jeden Ordner wieder neu so einstellenwie ich es gerne hätte.</div>
<div class="b" style="left:1720px;top:189.5px;width:12px;height:8.5px;background:#1c1b22;"></div>
<div class="b" style="left:1354.3px;top:190.7px;width:377.70000000000005px;height:741.3px;background:#42414d;border-radius:6px 6px 8px 8px;border:1px solid #55545d;box-sizing:border-box;box-shadow:0 0 2px rgba(0,0,0,.5);"></div>
<div class="t" style="left:1399.5px;top:202.1px;font-size:14.7px;line-height:20px;color:#fbfbfe;">Nachrichten auswählen</div>
<div class="t" style="left:1399.5px;top:232.1px;font-size:14.7px;line-height:20px;color:#fbfbfe;">Thema</div>
<svg class="b" style="left:1370px;top:265.2px;" width="16" height="10" viewBox="0 0 16 10" fill="none"><path d="M2.2 4.2L6.6 8.3L13.7 0.4" stroke="#fbfbfe" stroke-width="1.7"/></svg>
<div class="t" style="left:1399.5px;top:262.1px;font-size:14.7px;line-height:20px;color:#fbfbfe;">Kennzeichnung</div>
<svg class="b" style="left:1370px;top:295.2px;" width="16" height="10" viewBox="0 0 16 10" fill="none"><path d="M2.2 4.2L6.6 8.3L13.7 0.4" stroke="#fbfbfe" stroke-width="1.7"/></svg>
<div class="t" style="left:1399.5px;top:292.1px;font-size:14.7px;line-height:20px;color:#fbfbfe;">Anhänge</div>
<svg class="b" style="left:1370px;top:325.2px;" width="16" height="10" viewBox="0 0 16 10" fill="none"><path d="M2.2 4.2L6.6 8.3L13.7 0.4" stroke="#fbfbfe" stroke-width="1.7"/></svg>
<div class="t" style="left:1399.5px;top:322.1px;font-size:14.7px;line-height:20px;color:#fbfbfe;">Priorität</div>
<svg class="b" style="left:1370px;top:355.2px;" width="16" height="10" viewBox="0 0 16 10" fill="none"><path d="M2.2 4.2L6.6 8.3L13.7 0.4" stroke="#fbfbfe" stroke-width="1.7"/></svg>
<div class="t" style="left:1399.5px;top:352.1px;font-size:14.7px;line-height:20px;color:#fbfbfe;">Gelesen / Ungelesen</div>
<svg class="b" style="left:1370px;top:385.2px;" width="16" height="10" viewBox="0 0 16 10" fill="none"><path d="M2.2 4.2L6.6 8.3L13.7 0.4" stroke="#fbfbfe" stroke-width="1.7"/></svg>
<div class="t" style="left:1399.5px;top:382.1px;font-size:14.7px;line-height:20px;color:#fbfbfe;">Von</div>
<svg class="b" style="left:1370px;top:415.2px;" width="16" height="10" viewBox="0 0 16 10" fill="none"><path d="M2.2 4.2L6.6 8.3L13.7 0.4" stroke="#fbfbfe" stroke-width="1.7"/></svg>
<div class="t" style="left:1399.5px;top:412.1px;font-size:14.7px;line-height:20px;color:#fbfbfe;">Empfänger</div>
<div class="t" style="left:1399.5px;top:442.1px;font-size:14.7px;line-height:20px;color:#fbfbfe;">Beteiligte</div>
<svg class="b" style="left:1370px;top:475.2px;" width="16" height="10" viewBox="0 0 16 10" fill="none"><path d="M2.2 4.2L6.6 8.3L13.7 0.4" stroke="#fbfbfe" stroke-width="1.7"/></svg>
<div class="t" style="left:1399.5px;top:472.1px;font-size:14.7px;line-height:20px;color:#fbfbfe;">Junk-Status</div>
<div class="t" style="left:1399.5px;top:502.1px;font-size:14.7px;line-height:20px;color:#fbfbfe;">Empfangen</div>
<svg class="b" style="left:1370px;top:535.2px;" width="16" height="10" viewBox="0 0 16 10" fill="none"><path d="M2.2 4.2L6.6 8.3L13.7 0.4" stroke="#fbfbfe" stroke-width="1.7"/></svg>
<div class="t" style="left:1399.5px;top:532.1px;font-size:14.7px;line-height:20px;color:#fbfbfe;">Datum</div>
<div class="t" style="left:1399.5px;top:562.1px;font-size:14.7px;line-height:20px;color:#fbfbfe;">Status</div>
<svg class="b" style="left:1370px;top:595.2px;" width="16" height="10" viewBox="0 0 16 10" fill="none"><path d="M2.2 4.2L6.6 8.3L13.7 0.4" stroke="#fbfbfe" stroke-width="1.7"/></svg>
<div class="t" style="left:1399.5px;top:592.1px;font-size:14.7px;line-height:20px;color:#fbfbfe;">Größe</div>
<div class="t" style="left:1399.5px;top:622.1px;font-size:14.7px;line-height:20px;color:#fbfbfe;">Schlagwörter</div>
<div class="t" style="left:1399.5px;top:652.1px;font-size:14.7px;line-height:20px;color:#fbfbfe;">Konto</div>
<div class="t" style="left:1399.5px;top:682.1px;font-size:14.7px;line-height:20px;color:#fbfbfe;">Ungelesen</div>
<div class="t" style="left:1399.5px;top:712.1px;font-size:14.7px;line-height:20px;color:#fbfbfe;">Gesamt</div>
<div class="t" style="left:1399.5px;top:742.1px;font-size:14.7px;line-height:20px;color:#fbfbfe;">Ablageort</div>
<div class="t" style="left:1399.5px;top:772.1px;font-size:14.7px;line-height:20px;color:#fbfbfe;">Eingangsreihenfolge</div>
<div class="t" style="left:1399.5px;top:802.1px;font-size:14.7px;line-height:20px;color:#fbfbfe;">Löschen</div>
<div class="b" style="left:1366px;top:831px;width:358px;height:1px;background:#56555f;"></div>
<div class="b" style="left:1358px;top:867.4px;width:370px;height:29.600000000000023px;background:#5e5d68;border-radius:4px;"></div>
<div class="t" style="left:1399.2px;top:842.9px;font-size:14.7px;line-height:20px;color:#fbfbfe;">Spaltenreihenfolge zurücksetzen</div>
<div class="t" style="left:1399.2px;top:872.9px;font-size:14.7px;line-height:20px;color:#fbfbfe;">Spalteneinstellungen übernehmen für...</div>
<div class="t" style="left:1399.2px;top:902.9px;font-size:14.7px;line-height:20px;color:#fbfbfe;">Apply current view to...</div>
<svg class="b" style="left:1705.5px;top:874px" width="10" height="14" viewBox="0 0 10 14" fill="none"><path d="M1 1.25L8.7 7L1 12.75" stroke="#fbfbfe" stroke-width="1.3"/></svg>
<svg class="b" style="left:1705.5px;top:904px" width="10" height="14" viewBox="0 0 10 14" fill="none"><path d="M1 1.25L8.7 7L1 12.75" stroke="#fbfbfe" stroke-width="1.3"/></svg>
<div class="b" style="left:1040.5px;top:867px;width:317.5px;height:69.60000000000002px;background:#42414d;border-radius:7px;border:1px solid #55545d;box-sizing:border-box;box-shadow:0 0 2px rgba(0,0,0,.5);"></div>
<div class="b" style="left:1044.8px;top:901.8px;width:309.20000000000005px;height:30.100000000000023px;background:#5e5d68;border-radius:4px;"></div>
<div class="t" style="left:1085px;top:877.9px;font-size:14.7px;line-height:20px;color:#fbfbfe;">Ordner...</div>
<div class="t" style="left:1085px;top:907.9px;font-size:14.7px;line-height:20px;color:#fbfbfe;">Ordner und alle Unterordner...</div>
<svg class="b" style="left:1331.7px;top:879px" width="10" height="14" viewBox="0 0 10 14" fill="none"><path d="M1 1.25L8.7 7L1 12.75" stroke="#fbfbfe" stroke-width="1.3"/></svg>
<svg class="b" style="left:1331.7px;top:909px" width="10" height="14" viewBox="0 0 10 14" fill="none"><path d="M1 1.25L8.7 7L1 12.75" stroke="#fbfbfe" stroke-width="1.3"/></svg>
<div class="b" style="left:784px;top:902.2px;width:260.4000000000001px;height:69.0px;background:#42414d;border-radius:7px;border:1px solid #55545d;box-sizing:border-box;box-shadow:0 0 2px rgba(0,0,0,.5);"></div>
<div class="b" style="left:786px;top:937px;width:254px;height:29.299999999999955px;background:#5e5d68;border-radius:4px;"></div>
<div class="t" style="left:824px;top:912.9px;font-size:14.7px;line-height:20px;color:#fbfbfe;">roman.louis@arcor.de</div>
<div class="t" style="left:824px;top:942.9px;font-size:14.7px;line-height:20px;color:#fbfbfe;">Lokale Ordner</div>
<svg class="b" style="left:1017.4px;top:913.5px" width="10" height="14" viewBox="0 0 10 14" fill="none"><path d="M1 1.25L8.7 7L1 12.75" stroke="#fbfbfe" stroke-width="1.3"/></svg>
<svg class="b" style="left:1017.4px;top:943.5px" width="10" height="14" viewBox="0 0 10 14" fill="none"><path d="M1 1.25L8.7 7L1 12.75" stroke="#fbfbfe" stroke-width="1.3"/></svg>
<div class="b" style="left:469.2px;top:820.3px;width:314.8px;height:232.70000000000005px;background:#42414d;border-radius:8px 8px 10px 10px;border:1px solid #55545d;box-sizing:border-box;box-shadow:0 0 2px rgba(0,0,0,.5);"></div>
<div class="b" style="left:474px;top:825px;width:305px;height:29.600000000000023px;background:#5e5d68;border-radius:4px;"></div>
<div class="b" style="left:478px;top:859.5px;width:297px;height:1.0px;background:#56555f;"></div>
<div class="t" style="left:514px;top:830.9px;font-size:14.7px;line-height:20px;color:#fbfbfe;">Lokale Ordner</div>
<div class="t" style="left:514px;top:872.0px;font-size:14.7px;line-height:20px;color:#fbfbfe;white-space:pre;">Papierkorb</div>
<div class="t" style="left:514px;top:902.0px;font-size:14.7px;line-height:20px;color:#fbfbfe;white-space:pre;">Postausgang</div>
<div class="t" style="left:514px;top:932.0px;font-size:14.7px;line-height:20px;color:#fbfbfe;white-space:pre;">003 ____</div>
<div class="t" style="left:514px;top:962.0px;font-size:14.7px;line-height:20px;color:#fbfbfe;white-space:pre;">009 Alte SMS</div>
<svg class="b" style="left:756px;top:963px" width="10" height="14" viewBox="0 0 10 14" fill="none"><path d="M1 1.25L8.7 7L1 12.75" stroke="#fbfbfe" stroke-width="1.3"/></svg>
<div class="t" style="left:514px;top:992.0px;font-size:14.7px;line-height:20px;color:#fbfbfe;white-space:pre;">010 Louis      u Verwandschaft</div>
<svg class="b" style="left:756px;top:993px" width="10" height="14" viewBox="0 0 10 14" fill="none"><path d="M1 1.25L8.7 7L1 12.75" stroke="#fbfbfe" stroke-width="1.3"/></svg>
<div class="t" style="left:514px;top:1022.0px;font-size:14.7px;line-height:20px;color:#fbfbfe;white-space:pre;">011 Roman</div>
<svg class="b" style="left:756px;top:1023px" width="10" height="14" viewBox="0 0 10 14" fill="none"><path d="M1 1.25L8.7 7L1 12.75" stroke="#fbfbfe" stroke-width="1.3"/></svg>
<svg class="b" style="left:0;top:0" width="1786" height="1050" viewBox="0 0 1786 1050" fill="none"><g transform="translate(486,835) scale(1)"><path d="M1.6 0.7H5.5L7 2.2H12.6Q13.6 2.2 13.6 3.2V10.2Q13.6 11.2 12.6 11.2H1.6Q0.6 11.2 0.6 10.2V1.7Q0.6 0.7 1.6 0.7Z" fill="#5b5b66" stroke="#fbfbfe" stroke-width="1.2"/><path d="M0.6 3.8H5.8L7 2.2" stroke="#fbfbfe" stroke-width="1.1"/></g><g transform="translate(487.2,873.6) scale(0.8)"><path d="M2.2 5H12.8L11.8 16.2Q11.6 17.2 10.6 17.2H4.4Q3.4 17.2 3.2 16.2Z" fill="none" stroke="#fbfbfe" stroke-width="1.4"/><path d="M0.8 3.5H14.2M5.6 3.3Q5.6 1 7.5 1Q9.4 1 9.4 3.3M6 7.5V14.5M9 7.5V14.5" stroke="#fbfbfe" stroke-width="1.3"/></g><g transform="translate(486,904.7) scale(0.85)"><rect x="0.8" y="0.8" width="16" height="16" rx="3" fill="none" stroke="#fbfbfe" stroke-width="1.4"/><path d="M3.5 4.5H13.5M3 7.5H14M3 7.5V11.5H7" stroke="#fbfbfe" stroke-width="1.3" fill="none"/><path d="M8.5 12.5L18 9L13.5 16.5L12.3 13.8Z" fill="none" stroke="#fbfbfe" stroke-width="1.3" stroke-linejoin="round"/></g><g transform="translate(486,935.5) scale(1)"><path d="M1.6 0.7H5.5L7 2.2H12.6Q13.6 2.2 13.6 3.2V10.2Q13.6 11.2 12.6 11.2H1.6Q0.6 11.2 0.6 10.2V1.7Q0.6 0.7 1.6 0.7Z" fill="#5b5b66" stroke="#fbfbfe" stroke-width="1.2"/><path d="M0.6 3.8H5.8L7 2.2" stroke="#fbfbfe" stroke-width="1.1"/></g><g transform="translate(486,965.5) scale(1)"><path d="M1.6 0.7H5.5L7 2.2H12.6Q13.6 2.2 13.6 3.2V10.2Q13.6 11.2 12.6 11.2H1.6Q0.6 11.2 0.6 10.2V1.7Q0.6 0.7 1.6 0.7Z" fill="#5b5b66" stroke="#fbfbfe" stroke-width="1.2"/><path d="M0.6 3.8H5.8L7 2.2" stroke="#fbfbfe" stroke-width="1.1"/></g><g transform="translate(486,995.5) scale(1)"><path d="M1.6 0.7H5.5L7 2.2H12.6Q13.6 2.2 13.6 3.2V10.2Q13.6 11.2 12.6 11.2H1.6Q0.6 11.2 0.6 10.2V1.7Q0.6 0.7 1.6 0.7Z" fill="#5b5b66" stroke="#fbfbfe" stroke-width="1.2"/><path d="M0.6 3.8H5.8L7 2.2" stroke="#fbfbfe" stroke-width="1.1"/></g><g transform="translate(486,1025.5) scale(1)"><path d="M1.6 0.7H5.5L7 2.2H12.6Q13.6 2.2 13.6 3.2V10.2Q13.6 11.2 12.6 11.2H1.6Q0.6 11.2 0.6 10.2V1.7Q0.6 0.7 1.6 0.7Z" fill="#5b5b66" stroke="#fbfbfe" stroke-width="1.2"/><path d="M0.6 3.8H5.8L7 2.2" stroke="#fbfbfe" stroke-width="1.1"/></g><g transform="translate(796.2,946.5) scale(1)"><path d="M1.6 0.7H5.5L7 2.2H12.6Q13.6 2.2 13.6 3.2V10.2Q13.6 11.2 12.6 11.2H1.6Q0.6 11.2 0.6 10.2V1.7Q0.6 0.7 1.6 0.7Z" fill="#5b5b66" stroke="#fbfbfe" stroke-width="1.2"/><path d="M0.6 3.8H5.8L7 2.2" stroke="#fbfbfe" stroke-width="1.1"/></g><g transform="translate(796,916.6) scale(1)"><rect x="0.6" y="0.6" width="13.5" height="10.5" rx="1.5" fill="none" stroke="#fbfbfe" stroke-width="1.2"/><path d="M1.5 1.8L5.5 5L1.5 8.2" stroke="#fbfbfe" stroke-width="1.1" fill="none"/><rect x="7.5" y="7" width="8" height="6" rx="1" fill="#42414d" stroke="#fbfbfe" stroke-width="1.2"/><path d="M9.3 7V5.6Q9.3 3.8 11.5 3.8Q13.7 3.8 13.7 5.6V7" stroke="#fbfbfe" stroke-width="1.1" fill="none"/></g></svg>
<div class="b" style="left:1454.3px;top:255.6px;width:77.70000000000005px;height:6.099999999999994px;background:#ffff00;border-radius:3.049999999999997px;"></div>
<div class="b" style="left:1438.2px;top:344.6px;width:81.70000000000005px;height:6.099999999999966px;background:#ffff00;border-radius:3.049999999999983px;"></div>
<div class="b" style="left:1422.3px;top:404.7px;width:75.70000000000005px;height:6.100000000000023px;background:#ffff00;border-radius:3.0500000000000114px;"></div>
<div class="b" style="left:1429px;top:437.6px;width:75.59999999999991px;height:6.099999999999966px;background:#ffff00;border-radius:3.049999999999983px;"></div>
<div class="b" style="left:1419.9px;top:613.5px;width:65.09999999999991px;height:7.399999999999977px;background:#ffff00;border-radius:3.6999999999999886px;"></div>
<div class="b" style="left:471.4px;top:860.7px;width:176.0px;height:7.599999999999909px;background:#ffff00;border-radius:3.7999999999999545px;"></div>
<div class="b" style="left:805px;top:968px;width:242.5999999999999px;height:7.2000000000000455px;background:#ffff00;border-radius:3.6000000000000227px;"></div>
<div class="b" style="left:1069px;top:931.9px;width:277px;height:6.600000000000023px;background:#ffff00;border-radius:3.3000000000000114px;"></div>
<div class="t" style="left:1503.71px;top:487.3px;font-size:23px;line-height:40px;color:#f8f82e;font-weight:bold;white-space:pre;transform:scaleX(0.9902);transform-origin:0 0;">Das</div>
<div class="t" style="left:1503.06px;top:514.4px;font-size:23px;line-height:40px;color:#f8f82e;font-weight:bold;white-space:pre;transform:scaleX(1.0356);transform-origin:0 0;">sind</div>
<div class="t" style="left:1503.00px;top:541.3px;font-size:23px;line-height:40px;color:#f8f82e;font-weight:bold;white-space:pre;transform:scaleX(1.0046);transform-origin:0 0;">meine</div>
<div class="t" style="left:1503.67px;top:568.1px;font-size:23px;line-height:40px;color:#f8f82e;font-weight:bold;white-space:pre;transform:scaleX(1.0315);transform-origin:0 0;">Einstellungen</div>
<svg class="b" style="left:1540px;top:70px;" width="230" height="150" viewBox="0 0 230 150" fill="none"><path d="M14.8 13.8L138 78" stroke="#ffff00" stroke-width="6.8" stroke-linecap="round"/><path d="M134 66L122 86L148 86Z" fill="#ffff00" stroke="#ffff00" stroke-width="3" stroke-linejoin="round"/><rect x="162.5" y="82.5" width="49" height="54.5" rx="2" stroke="#ffff00" stroke-width="7"/></svg>
<svg class="b" style="left:1230px;top:790px;" width="180" height="110" viewBox="0 0 180 110" fill="none"><path d="M21 22L125 77" stroke="#ffff00" stroke-width="8" stroke-linecap="round"/><path d="M131.5 65.5L119.4 89L147.7 87Z" fill="#ffff00" stroke="#ffff00" stroke-width="3" stroke-linejoin="round"/></svg>
</body></html>
